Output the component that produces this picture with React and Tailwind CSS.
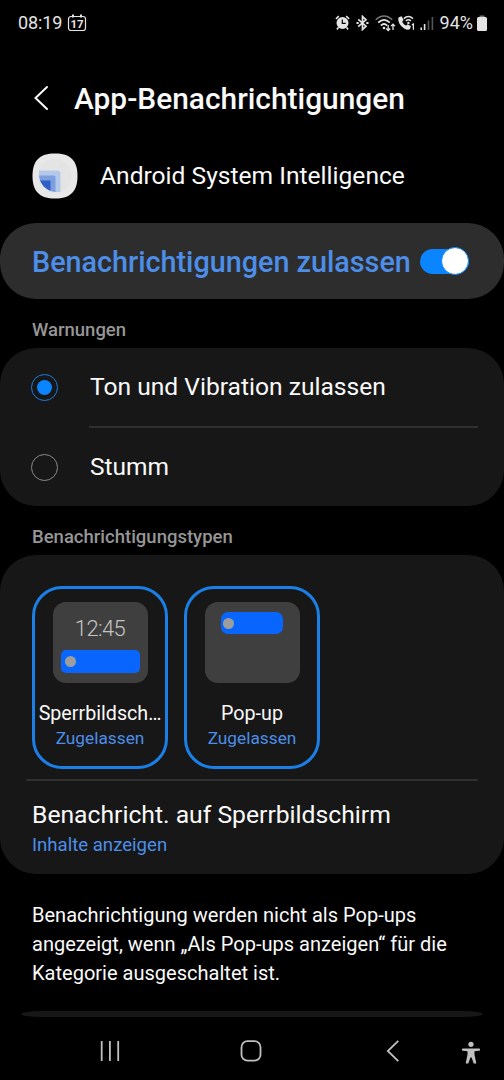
import React, { useState } from 'react';

const StatusBar = () => (
  <div className="flex h-[46px] items-center pl-[18px] pr-[16px] text-[#e4e4e4]">
    <span className="text-[18px] leading-none tracking-[-0.1px]">08:19</span>
    <svg className="ml-[5px]" width="20" height="18" viewBox="0 0 20 18" fill="none" stroke="currentColor">
      <rect x="1.5" y="2.5" width="17" height="14" rx="2.5" strokeWidth="1.2" />
      <path d="M6 0.5v3M14 0.5v3" strokeWidth="2" />
      <text x="10" y="13.7" fontSize="11.5" fontWeight="700" textAnchor="middle" fill="currentColor" stroke="none">
        17
      </text>
    </svg>

    <div className="ml-auto flex items-center">
      {/* alarm */}
      <svg width="15" height="16" viewBox="0 0 15 16" fill="none" stroke="currentColor">
        <circle cx="7.5" cy="8" r="6" fill="currentColor" stroke="none" />
        <path d="M0.9 3.8 3.8 1.2M14.1 3.8 11.2 1.2M3.4 12.6l-1.5 2M11.6 12.6l1.5 2" strokeWidth="1.6" />
        <path d="M7.3 4.5v3.9h3.4" stroke="#000" strokeWidth="1.2" />
      </svg>
      {/* bluetooth */}
      <svg className="ml-[6px]" width="13" height="16" viewBox="0 0 13 16" fill="none" stroke="currentColor">
        <path d="M2.2 4.4 10 11.2 6.5 14.5V1.5L10 4.8 2.2 11.6" strokeWidth="1.7" />
        <path d="M0.5 8h2.2M10.3 8h2.2" strokeWidth="2" />
      </svg>
      {/* wifi */}
      <svg className="ml-[6px]" width="21" height="17" viewBox="0 0 21 17" fill="none" stroke="currentColor">
        <path d="M0.8 4.8C5.8-0.3 12.2-0.3 17.2 4.8" stroke="#777" strokeWidth="1.6" />
        <path d="M3.2 7.7c3.6-3.5 8-3.5 11.6 0M5.9 10.5c2-1.9 4.2-1.9 6.2 0" strokeWidth="1.8" />
        <circle cx="9" cy="13" r="1.3" fill="currentColor" stroke="none" />
        <path d="M13.2 10v5.3M11.2 13.5l2 2 2-2M18 15V9.2M16 11.1l2-2 2 2" strokeWidth="1.3" />
      </svg>
      {/* wifi calling */}
      <svg className="ml-[2px]" width="18" height="16" viewBox="0 0 18 16" fill="none" stroke="currentColor">
        <path
          d="M.8 2.2 3.6 1.2 5.6 5 4.2 6.7c.9 1.9 2.1 3 3.9 3.9l1.7-1.4 3.1 2.1-.9 2.6c-1.1 1.2-3.2 1-5.4-.1C2.6 11.6-.2 7 .3 3.5z"
          fill="currentColor"
          stroke="none"
        />
        <path d="M5.8 3.6c2.8-2.5 6.4-2.5 9.2 0M7.9 5.9c1.5-1.4 3.5-1.4 5 0" strokeWidth="1.5" />
        <circle cx="10.4" cy="7.9" r="1.2" fill="currentColor" stroke="none" />
        <path d="M13.8 9.9l1.6-.9v5.7" strokeWidth="1.3" />
      </svg>
      {/* signal */}
      <svg className="ml-[4px]" width="14" height="14" viewBox="0 0 14 14" strokeWidth="1.6">
        <path d="M1.2 14v-2.5M4.6 14V8" stroke="#e4e4e4" />
        <path d="M8.5 14V4.5M12.4 14V1" stroke="#555" />
      </svg>
      <span className="ml-[6px] text-[18px] leading-none">94%</span>
      <svg className="ml-[3px]" width="12" height="16" viewBox="0 0 12 16">
        <path d="M3.5.5h5v2h-5z" fill="#777" />
        <rect x="1" y="2" width="10" height="14" rx="1.5" fill="currentColor" />
      </svg>
    </div>
  </div>
);

const AppIcon = () => (
  <svg width="46" height="46" viewBox="0 0 46 46">
    <path d="M23 .5C38.5.5 45.5 7.5 45.5 23S38.5 45.5 23 45.5.5 38.5.5 23 7.5.5 23 .5z" fill="#e8e8e8" />
    <circle cx="23" cy="23" r="17" fill="#e4e4e4" />
    <clipPath id="disc">
      <path d="M7 10h30v29H23C14 38 7 30.5 7 21z" />
    </clipPath>
    <g clipPath="url(#disc)">
      <rect x="0" y="17.5" width="28.5" height="30" rx="3" fill="#b4c9ea" />
      <rect x="0" y="22.5" width="23.5" height="30" rx="1.5" fill="#7d9fe0" />
      <rect x="0" y="27.5" width="18.5" height="30" fill="#2f5fc4" />
    </g>
  </svg>
);

const Radio = ({ checked }) => (
  <span
    className={`flex h-[27px] w-[27px] items-center justify-center rounded-full border-[1.5px] ${
      checked ? 'border-[#1a7fe6]' : 'border-[#8a8a8a]'
    }`}
  >
    {checked && <span className="h-[15px] w-[15px] rounded-full bg-[#0a84ff]" />}
  </span>
);

const SectionLabel = ({ children }) => (
  <h2 className="flex h-[49px] items-center pl-[32px] pt-[14px] text-[18.5px] font-medium text-[#969696]">{children}</h2>
);

const TypeCard = ({ title, children }) => (
  <button className="flex h-[183px] w-[136px] flex-col items-center rounded-[30px] border-[3px] border-[#1a7fe6] pt-[13px]">
    {children}
    <span className="mt-[19px] text-[19.7px] leading-[24px] text-[#fafafa]">{title}</span>
    <span className="mt-px text-[17.3px] leading-[22px] text-[#4c8ee8]">Zugelassen</span>
  </button>
);

export default function App() {
  const [enabled, setEnabled] = useState(true);
  const [alert, setAlert] = useState('sound');

  return (
    <div className="flex h-[1080px] w-[504px] flex-col overflow-hidden bg-black font-['Roboto',sans-serif] text-[#fafafa]">
      <StatusBar />

      <header className="flex h-[106px] items-center pl-[34px]">
        <svg className="-mt-[2px]" width="15" height="26" viewBox="0 0 15 26" fill="none" stroke="currentColor" strokeWidth="2" strokeLinecap="round">
          <path d="M13 2 1.5 13 13 24" />
        </svg>
        <h1 className="ml-[25px] mt-px text-[29.9px] font-medium">App-Benachrichtigungen</h1>
      </header>

      <div className="flex h-[71px] items-start pl-[32px] pt-[1px]">
        <AppIcon />
        <span className="ml-[22px] mt-[5px] text-[24.6px] leading-[36px]">Android System Intelligence</span>
      </div>

      <div className="flex h-[76px] shrink-0 items-center rounded-[36px] bg-[#2d2d2d] pl-[32px]">
        <span className="mt-[4px] text-[28.75px] font-medium text-[#4c8ee8]">Benachrichtigungen zulassen</span>
        <button
          onClick={() => setEnabled(!enabled)}
          className={`ml-auto mr-[35px] flex h-[25px] w-[49px] items-center rounded-full ${
            enabled ? 'justify-end bg-[#0a84ff]' : 'bg-[#555]'
          }`}
        >
          <span className="h-[28px] w-[28px] shrink-0 rounded-full border border-[#0a84ff] bg-white" />
        </button>
      </div>

      <SectionLabel>Warnungen</SectionLabel>
      <div className="h-[158px] shrink-0 rounded-[36px] bg-[#171717] pl-[31px]">
        <div className="flex h-[78px] items-center" onClick={() => setAlert('sound')}>
          <Radio checked={alert === 'sound'} />
          <span className="ml-[32px] text-[24.6px]">Ton und Vibration zulassen</span>
        </div>
        <div className="ml-[58px] mr-[26px] h-[2px] bg-[#303030]" />
        <div className="flex h-[78px] items-center" onClick={() => setAlert('silent')}>
          <Radio checked={alert === 'silent'} />
          <span className="ml-[32px] text-[24.5px]">Stumm</span>
        </div>
      </div>

      <SectionLabel>Benachrichtigungstypen</SectionLabel>
      <div className="h-[319px] shrink-0 rounded-[36px] bg-[#171717] pt-[31px]">
        <div className="flex gap-[16px] pl-[32px]">
          <TypeCard title="Sperrbildsch…">
            <div className="flex h-[81px] w-[95px] flex-col items-center rounded-[13px] bg-[#3f3f3f] pt-[15px]">
              <span className="text-[22px] font-light leading-[24px] tracking-[-0.6px] text-[#c4c4c4]">12:45</span>
              <span className="mt-[9px] flex h-[23px] w-[79px] items-center rounded-[5px] bg-[#0866ff] pl-[4px]">
                <span className="h-[11px] w-[11px] rounded-full bg-[#9d9d9d]" />
              </span>
            </div>
          </TypeCard>
          <TypeCard title="Pop-up">
            <div className="flex h-[81px] w-[95px] flex-col items-center rounded-[13px] bg-[#3f3f3f] pt-[10px]">
              <span className="flex h-[22px] w-[62px] items-center rounded-[7px] bg-[#0866ff] pl-[2px]">
                <span className="h-[11px] w-[11px] rounded-full bg-[#9d9d9d]" />
              </span>
            </div>
          </TypeCard>
        </div>
        <div className="mx-[26px] mt-[10px] h-[2px] bg-[#303030]" />
        <div className="pl-[32px] pt-[18px]">
          <div className="text-[24.7px] leading-[32px]">Benachricht. auf Sperrbildschirm</div>
          <div className="mt-[2px] text-[18.6px] leading-[24px] text-[#4c8ee8]">Inhalte anzeigen</div>
        </div>
      </div>

      <p className="h-[137px] shrink-0 pl-[32px] pt-[27px] text-[20.05px] leading-[28.8px]">
        Benachrichtigung werden nicht als Pop-ups
        <br />
        angezeigt, wenn „Als Pop-ups anzeigen“ für die
        <br />
        Kategorie ausgeschaltet ist.
      </p>

      {/* top edge of the next card */}
      <div className="mx-[21px] h-[6px] shrink-0 bg-[#171717] [border-radius:20px/3px]" />

      <nav className="flex h-[63px] shrink-0 items-center pt-[5px] text-[#c0c0c0]">
        <svg className="ml-[100px]" width="20" height="22" viewBox="0 0 20 22" stroke="currentColor" strokeWidth="1.8">
          <path d="M1.7 1v20M9.9 1v20M18.2 1v20" />
        </svg>
        <svg className="ml-[120px]" width="22" height="22" viewBox="0 0 22 22" fill="none" stroke="currentColor" strokeWidth="1.8">
          <rect x="1.5" y="1.2" width="19" height="19.5" rx="6" />
        </svg>
        <svg className="ml-[124px]" width="14" height="22" viewBox="0 0 14 22" fill="none" stroke="currentColor" strokeWidth="1.8">
          <path d="M12.3.8 1.8 11l10.5 10.2" />
        </svg>
        <svg className="ml-[61px] mt-[4px]" width="20" height="24" viewBox="0 0 20 24" fill="currentColor">
          <circle cx="10" cy="3.3" r="2.6" />
          <path d="M2 7.500h16a1 1 0 0 1 0 2.300L13.500 10.300v3.200l1.800 9h-2.600L10.600 16.500h-1.200l-2.100 6H4.700l1.800-9v-3.200L2 9.800a1 1 0 0 1 0-2.300z" />
        </svg>
      </nav>
    </div>
  );
}
